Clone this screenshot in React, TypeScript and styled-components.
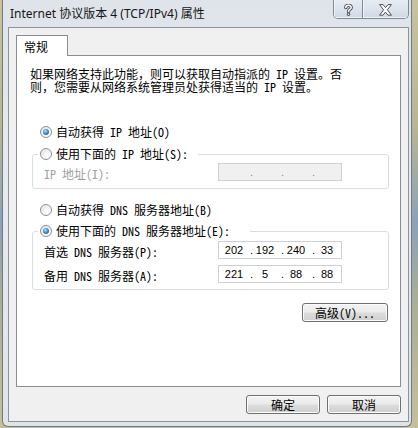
import React from "react";
import styled, { createGlobalStyle } from "styled-components";

const GlobalStyle = createGlobalStyle`
  html, body { margin: 0; padding: 0; }
  body { width: 418px; height: 428px; overflow: hidden; background: #b9b693; }
  * { box-sizing: border-box; }
`;

const CJK = `"Noto Sans CJK SC", "Noto Sans", sans-serif`;

const Desktop = styled.div`
  width: 418px;
  height: 428px;
  padding-left: 2px;
  display: flex;
  background: linear-gradient(180deg, #c8c39d 0%, #b8b590 30%, #8aa2b9 52%, #a9ae95 70%, #c6c09a 100%);
`;

const Window = styled.div`
  width: 410px;
  height: 427px;
  display: flex;
  flex-direction: column;
  padding: 0 2px 4px 5px;
  border: 1px solid #6f7a86;
  border-top: none;
  border-radius: 0 0 6px 6px;
  background: linear-gradient(180deg, #dfe4ea 0%, #e7eaee 45%, #e0e3e7 100%);
`;

const TitleBar = styled.div`
  height: 27px;
  display: flex;
  align-items: flex-start;
`;

const Title = styled.div`
  flex: 1;
  padding: 6px 0 0 2px;
  font: 12px/16px "Noto Sans", "Noto Sans CJK SC", sans-serif;
  color: #151515;
  white-space: nowrap;
`;

const CaptionGroup = styled.div`
  display: flex;
  height: 19px;
  border: 1px solid #7f8996;
  border-top: none;
  border-radius: 0 0 5px 5px;
  overflow: hidden;
`;

const CaptionButton = styled.div<{ $w: number }>`
  width: ${(p) => p.$w}px;
  height: 100%;
  display: flex;
  align-items: center;
  justify-content: center;
  padding-top: 1px;
  background: linear-gradient(180deg, #e6ecf2 0%, #dbe3ec 50%, #cfd9e4 100%);
  box-shadow: inset 0 -1px 0 rgba(255, 255, 255, 0.7), inset 1px 0 0 rgba(255, 255, 255, 0.6);
  & + & {
    border-left: 1px solid #7f8996;
  }
`;

const Client = styled.div`
  flex: 1;
  display: flex;
  flex-direction: column;
  border: 1px solid #8c939c;
  background: #f0f0f0;
  padding: 7px;
`;

const TabStrip = styled.div`
  display: flex;
  height: 20px;
`;

const Tab = styled.div`
  position: relative;
  z-index: 1;
  width: 52px;
  height: 21px;
  padding: 4px 0 0 7px;
  border: 1px solid #898c95;
  border-bottom: none;
  background: #ffffff;
  font: 12px/14px ${CJK};
  color: #000;
`;

const Panel = styled.div`
  height: 332px;
  display: flex;
  flex-direction: column;
  border: 1px solid #898c95;
  background: #ffffff;
  padding: 11px 11px 0 13px;
  font: 12px/13px ${CJK};
  font-feature-settings: "hwid" 1;
  color: #000;
`;

const Description = styled.p`
  margin: 0;
  line-height: 13px;
  white-space: nowrap;
`;

const Punct = styled.span`
  font-feature-settings: normal;
`;

const RadioRow = styled.div<{ $indent?: number; $mt?: number }>`
  display: flex;
  align-items: center;
  gap: 4px;
  height: 16px;
  margin-top: ${(p) => p.$mt ?? 0}px;
  padding-left: ${(p) => p.$indent ?? 0}px;
  line-height: 16px;
  white-space: nowrap;
`;

const RadioDot = styled.span<{ $checked?: boolean }>`
  flex: none;
  width: 12px;
  height: 12px;
  border-radius: 50%;
  border: 1px solid #8b8f93;
  background: radial-gradient(circle at 70% 75%, #ffffff 0%, #f3f3f3 45%, #d3d3d3 100%);
  box-shadow: inset 0 0 0 1px rgba(255, 255, 255, 0.6);
  display: flex;
  align-items: center;
  justify-content: center;
  &::after {
    content: "";
    width: 6px;
    height: 6px;
    border-radius: 50%;
    display: ${(p) => (p.$checked ? "block" : "none")};
    background: radial-gradient(circle at 40% 35%, #b4e2ff 0%, #3f8fd0 45%, #17497a 100%);
  }
`;

const Group = styled.fieldset<{ $mt: number }>`
  margin: ${(p) => p.$mt}px 0 0 2px;
  padding: 0;
  min-width: 0;
  border: 1px solid #d5dfe5;
  border-radius: 3px;
`;

const Legend = styled.legend<{ $pr: number }>`
  margin-left: 5px;
  padding: 0 ${(p) => p.$pr}px 0 2px;
`;

const GroupBody = styled.div<{ $pt: number; $pb: number }>`
  display: grid;
  grid-template-columns: 174px 124px;
  row-gap: 6px;
  align-items: center;
  padding: ${(p) => p.$pt}px 0 ${(p) => p.$pb}px 11px;
`;

const FieldLabel = styled.span<{ $disabled?: boolean }>`
  color: ${(p) => (p.$disabled ? "#a0a0a0" : "#000")};
  white-space: nowrap;
  padding-top: 2px;
`;

const IpBox = styled.div<{ $disabled?: boolean }>`
  display: flex;
  align-items: center;
  width: 124px;
  height: 18px;
  padding-left: 3px;
  border: 1px solid ${(p) => (p.$disabled ? "#cfd1d4" : "#cdd1d7")};
  background: ${(p) => (p.$disabled ? "#f0f0f0" : "#ffffff")};
  font: 11px/16px "Liberation Sans", Arial, sans-serif;
  color: ${(p) => (p.$disabled ? "#8a8a8a" : "#000")};
`;

const IpSeg = styled.span`
  width: 24px;
  text-align: center;
`;

const IpDot = styled.span`
  width: 7px;
  padding-left: 4px;
  text-align: left;
`;

const Button = styled.button<{ $w: number }>`
  width: ${(p) => p.$w}px;
  height: 19px;
  padding: 0;
  border: 1px solid #707070;
  border-radius: 3px;
  background: linear-gradient(180deg, #f3f3f3 0%, #ebebeb 48%, #dddddd 52%, #cfcfcf 100%);
  box-shadow: inset 0 0 0 1px #fbfbfb;
  font: 12px/17px ${CJK};
  font-feature-settings: "hwid" 1;
  color: #000;
  text-align: center;
`;

const AdvancedRow = styled.div`
  display: flex;
  justify-content: flex-end;
  margin-top: 13px;
  padding-right: 1px;
`;

const ButtonRow = styled.div`
  display: flex;
  justify-content: flex-end;
  gap: 7px;
  margin-top: 8px;
`;

const HelpGlyph = () => (
  <svg width="9" height="12" viewBox="0 0 9 12">
    <path d="M1.8 3.6 C1.8 0.6 7.2 0.6 7.2 3.4 C7.2 5.4 4.5 5.4 4.5 7.6" fill="none" stroke="#4b4f55" strokeWidth="3.4" strokeLinecap="round" />
    <circle cx="4.5" cy="10.2" r="1.7" fill="#4b4f55" />
    <path d="M1.8 3.6 C1.8 0.6 7.2 0.6 7.2 3.4 C7.2 5.4 4.5 5.4 4.5 7.6" fill="none" stroke="#ffffff" strokeWidth="1.5" strokeLinecap="round" />
    <circle cx="4.5" cy="10.2" r="0.8" fill="#ffffff" />
  </svg>
);

const CloseGlyph = () => (
  <svg width="13" height="12" viewBox="0 0 13 12">
    <polygon
      points="0.6,0.6 4,0.6 6.5,3.6 9,0.6 12.4,0.6 8.4,5.8 12.4,11.2 9,11.2 6.5,8.1 4,11.2 0.6,11.2 4.6,5.8"
      fill="#ffffff"
      stroke="#4b4f55"
      strokeWidth="1"
      strokeLinejoin="round"
    />
  </svg>
);

const Ip = ({ parts, disabled }: { parts: string[]; disabled?: boolean }) => (
  <IpBox $disabled={disabled}>
    {parts.map((p, i) => (
      <React.Fragment key={i}>
        <IpSeg>{p}</IpSeg>
        {i < 3 && <IpDot>.</IpDot>}
      </React.Fragment>
    ))}
  </IpBox>
);

export default function App() {
  return (
    <>
      <GlobalStyle />
      <Desktop>
        <Window>
          <TitleBar>
            <Title>Internet 协议版本 4 (TCP/IPv4) 属性</Title>
            <CaptionGroup>
              <CaptionButton $w={28}>
                <HelpGlyph />
              </CaptionButton>
              <CaptionButton $w={46}>
                <CloseGlyph />
              </CaptionButton>
            </CaptionGroup>
          </TitleBar>
          <Client>
            <TabStrip>
              <Tab>常规</Tab>
            </TabStrip>
            <Panel>
              <Description>
                如果网络支持此功能<Punct>，</Punct>则可以获取自动指派的 IP 设置<Punct>。</Punct>否
                <br />
                则<Punct>，</Punct>您需要从网络系统管理员处获得适当的 IP 设置<Punct>。</Punct>
              </Description>
              <RadioRow $indent={10} $mt={31}>
                <RadioDot $checked />
                自动获得 IP 地址(O)
              </RadioRow>
              <Group $mt={6}>
                <Legend $pr={10}>
                  <RadioRow>
                    <RadioDot />
                    使用下面的 IP 地址(S):
                  </RadioRow>
                </Legend>
                <GroupBody $pt={1} $pb={7}>
                  <FieldLabel $disabled>IP 地址(I):</FieldLabel>
                  <Ip parts={["", "", "", ""]} disabled />
                </GroupBody>
              </Group>
              <RadioRow $indent={10} $mt={13}>
                <RadioDot />
                自动获得 DNS 服务器地址(B)
              </RadioRow>
              <Group $mt={5}>
                <Legend $pr={20}>
                  <RadioRow>
                    <RadioDot $checked />
                    使用下面的 DNS 服务器地址(E):
                  </RadioRow>
                </Legend>
                <GroupBody $pt={2} $pb={6}>
                  <FieldLabel>首选 DNS 服务器(P):</FieldLabel>
                  <Ip parts={["202", "192", "240", "33"]} />
                  <FieldLabel>备用 DNS 服务器(A):</FieldLabel>
                  <Ip parts={["221", "5", "88", "88"]} />
                </GroupBody>
              </Group>
              <AdvancedRow>
                <Button $w={86}>高级(V)...</Button>
              </AdvancedRow>
            </Panel>
            <ButtonRow>
              <Button $w={74}>确定</Button>
              <Button $w={74}>取消</Button>
            </ButtonRow>
          </Client>
        </Window>
      </Desktop>
    </>
  );
}
